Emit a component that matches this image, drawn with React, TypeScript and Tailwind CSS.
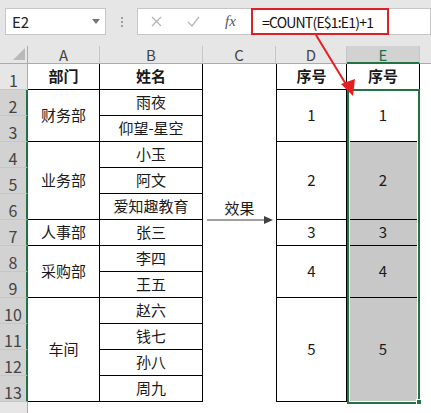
import React from 'react';

const cjk = "font-['Noto_Sans_CJK_SC',sans-serif]";

const colLetters = [
  { l: 'A', c: 'col-start-2' },
  { l: 'B', c: 'col-start-3' },
  { l: 'C', c: 'col-start-4' },
  { l: 'D', c: 'col-start-5' },
];

const rowStarts = [
  'row-start-2', 'row-start-3', 'row-start-4', 'row-start-5', 'row-start-6', 'row-start-7', 'row-start-8',
  'row-start-9', 'row-start-10', 'row-start-11', 'row-start-12', 'row-start-13', 'row-start-14',
];

const depts = [
  { t: '部门', c: 'row-start-2 font-bold' },
  { t: '财务部', c: 'row-start-3 row-span-2' },
  { t: '业务部', c: 'row-start-5 row-span-3' },
  { t: '人事部', c: 'row-start-8' },
  { t: '采购部', c: 'row-start-9 row-span-2' },
  { t: '车间', c: 'row-start-11 row-span-4' },
];

const names = ['姓名', '雨夜', '仰望-星空', '小玉', '阿文', '爱知趣教育', '张三', '李四', '王五', '赵六', '钱七', '孙八', '周九'];

const nums = [
  { t: '序号', c: 'row-start-2 font-bold', fill: false },
  { t: '1', c: 'row-start-3 row-span-2', fill: false },
  { t: '2', c: 'row-start-5 row-span-3', fill: true },
  { t: '3', c: 'row-start-8', fill: true },
  { t: '4', c: 'row-start-9 row-span-2', fill: true },
  { t: '5', c: 'row-start-11 row-span-4', fill: true },
];

const cell = 'flex items-center justify-center text-[15px] text-[#1a1a1a] border-b border-black';

export default function App() {
  return (
    <div className={`relative w-[431px] h-[413px] overflow-hidden bg-white ${cjk}`}>
      {/* name box + formula bar */}
      <div className="h-[46px] bg-[#e6e6e6] flex items-start pt-[8px] pl-[5px]">
        <div className="w-[101px] h-[27px] bg-white border border-[#c6c6c6] flex items-center justify-between pl-[6px] pr-[5px]">
          <span className="text-[15px] text-[#222] leading-none">E2</span>
          <svg width="8" height="5" viewBox="0 0 8 5">
            <path d="M0 0 L8 0 L4 5 Z" fill="#777" />
          </svg>
        </div>
        <div className="w-[31px] h-[27px] flex flex-col items-center justify-center gap-[2px]">
          <span className="w-[2px] h-[2px] bg-[#a0a0a0]" />
          <span className="w-[2px] h-[2px] bg-[#a0a0a0]" />
          <span className="w-[2px] h-[2px] bg-[#a0a0a0]" />
        </div>
        <div className="flex-1 h-[27px] bg-white border border-[#c6c6c6] flex items-center">
          <div className="w-[37px] flex justify-center">
            <svg width="11" height="11" viewBox="0 0 11 11">
              <path d="M1 1 L10 10 M10 1 L1 10" stroke="#b5b5b5" strokeWidth="1.3" />
            </svg>
          </div>
          <div className="w-[37px] flex justify-center">
            <svg width="13" height="11" viewBox="0 0 13 11">
              <path d="M1 6 L5 10 L12 1" stroke="#b5b5b5" strokeWidth="1.3" fill="none" />
            </svg>
          </div>
          <div className="w-[37px] flex justify-center">
            <span className="font-['Liberation_Serif',serif] italic text-[15px] text-[#555] leading-none">fx</span>
          </div>
          <span className="ml-[13px] text-[14px] tracking-[-0.8px] text-[#111] leading-none">=COUNT(E$1:E1)+1</span>
        </div>
      </div>

      {/* sheet */}
      <div className="grid grid-cols-[28px_72px_103px_73px_71px_73px_1fr] grid-rows-[18px_repeat(13,26px)_1fr] h-[367px]">
        {/* corner */}
        <div className="col-start-1 row-start-1 bg-[#e6e6e6] border-r border-b border-[#ababab] flex items-end justify-end pr-[2px] pb-[3px]">
          <svg width="12" height="12" viewBox="0 0 12 12">
            <path d="M12 0 L12 12 L0 12 Z" fill="#b9b9b9" />
          </svg>
        </div>
        {colLetters.map((h) => (
          <div
            key={h.l}
            className={`${h.c} row-start-1 bg-[#e6e6e6] border-r border-b border-r-[#c6c6c6] border-b-[#ababab] flex items-center justify-center text-[15px] text-[#444] leading-none`}
          >
            {h.l}
          </div>
        ))}
        <div className="col-start-6 row-start-1 bg-[#d2d2d2] border-r border-r-[#c6c6c6] border-b-2 border-b-[#217346] flex items-center justify-center text-[15px] text-[#217346] leading-none">
          E
        </div>
        <div className="col-start-7 row-start-1 bg-[#e6e6e6] border-b border-[#ababab]" />

        {/* row numbers */}
        {rowStarts.map((r, i) => (
          <div
            key={r}
            className={`col-start-1 ${r} flex items-end justify-center pb-[1px] text-[16px] leading-none text-[#444] border-b border-b-[#c6c6c6] ${
              i === 0 ? 'bg-[#e6e6e6] border-r border-r-[#ababab]' : 'bg-[#d2d2d2] border-r-2 border-r-[#217346]'
            }`}
          >
            {i + 1}
          </div>
        ))}
        <div className="col-start-1 row-start-15 bg-[#e6e6e6] border-r border-[#ababab]" />

        {/* A */}
        {depts.map((d) => (
          <div key={d.t} className={`col-start-2 ${d.c} ${cell} border-r`}>
            {d.t}
          </div>
        ))}
        {/* B */}
        {names.map((n, i) => (
          <div key={n} className={`col-start-3 ${rowStarts[i]} ${cell} border-r ${i === 0 ? 'font-bold' : ''}`}>
            {n}
          </div>
        ))}
        {/* C */}
        <div className="col-start-4 row-start-7 flex items-end justify-center pb-[1px] text-[15px] text-[#1a1a1a]">效果</div>
        {/* D */}
        {nums.map((d) => (
          <div key={'d' + d.t} className={`col-start-5 ${d.c} ${cell} border-l border-r`}>
            {d.t}
          </div>
        ))}
        {/* E */}
        {nums.map((d) => (
          <div
            key={'e' + d.t}
            className={`col-start-6 ${d.c} ${cell} border-r ${d.fill ? 'bg-[#c8c8c8]' : 'bg-white'}`}
          >
            {d.t}
          </div>
        ))}
      </div>

      {/* selection around E2:E13 */}
      <div className="absolute left-[347px] top-[89px] w-[73px] h-[315px] border-2 border-[#217346] shadow-[inset_0_0_0_1px_white] pointer-events-none" />
      <div className="absolute left-[416px] top-[399px] w-[6px] h-[6px] bg-[#217346] border border-white" />

      {/* red annotation box */}
      <div className="absolute left-[251px] top-[8px] w-[138px] h-[27px] border-2 border-[#dd1f26] pointer-events-none" />

      {/* arrows */}
      <svg className="absolute left-0 top-0 pointer-events-none" width="431" height="413" viewBox="0 0 431 413">
        <line x1="316" y1="35" x2="347" y2="86" stroke="#e41f1f" strokeWidth="2" />
        <path d="M353 96 L341 84 L355 79 Z" fill="#e41f1f" />
        <line x1="207" y1="220" x2="265" y2="220" stroke="#404040" strokeWidth="1.2" />
        <path d="M273 220 L264 216 L264 224 Z" fill="#404040" />
      </svg>
    </div>
  );
}
